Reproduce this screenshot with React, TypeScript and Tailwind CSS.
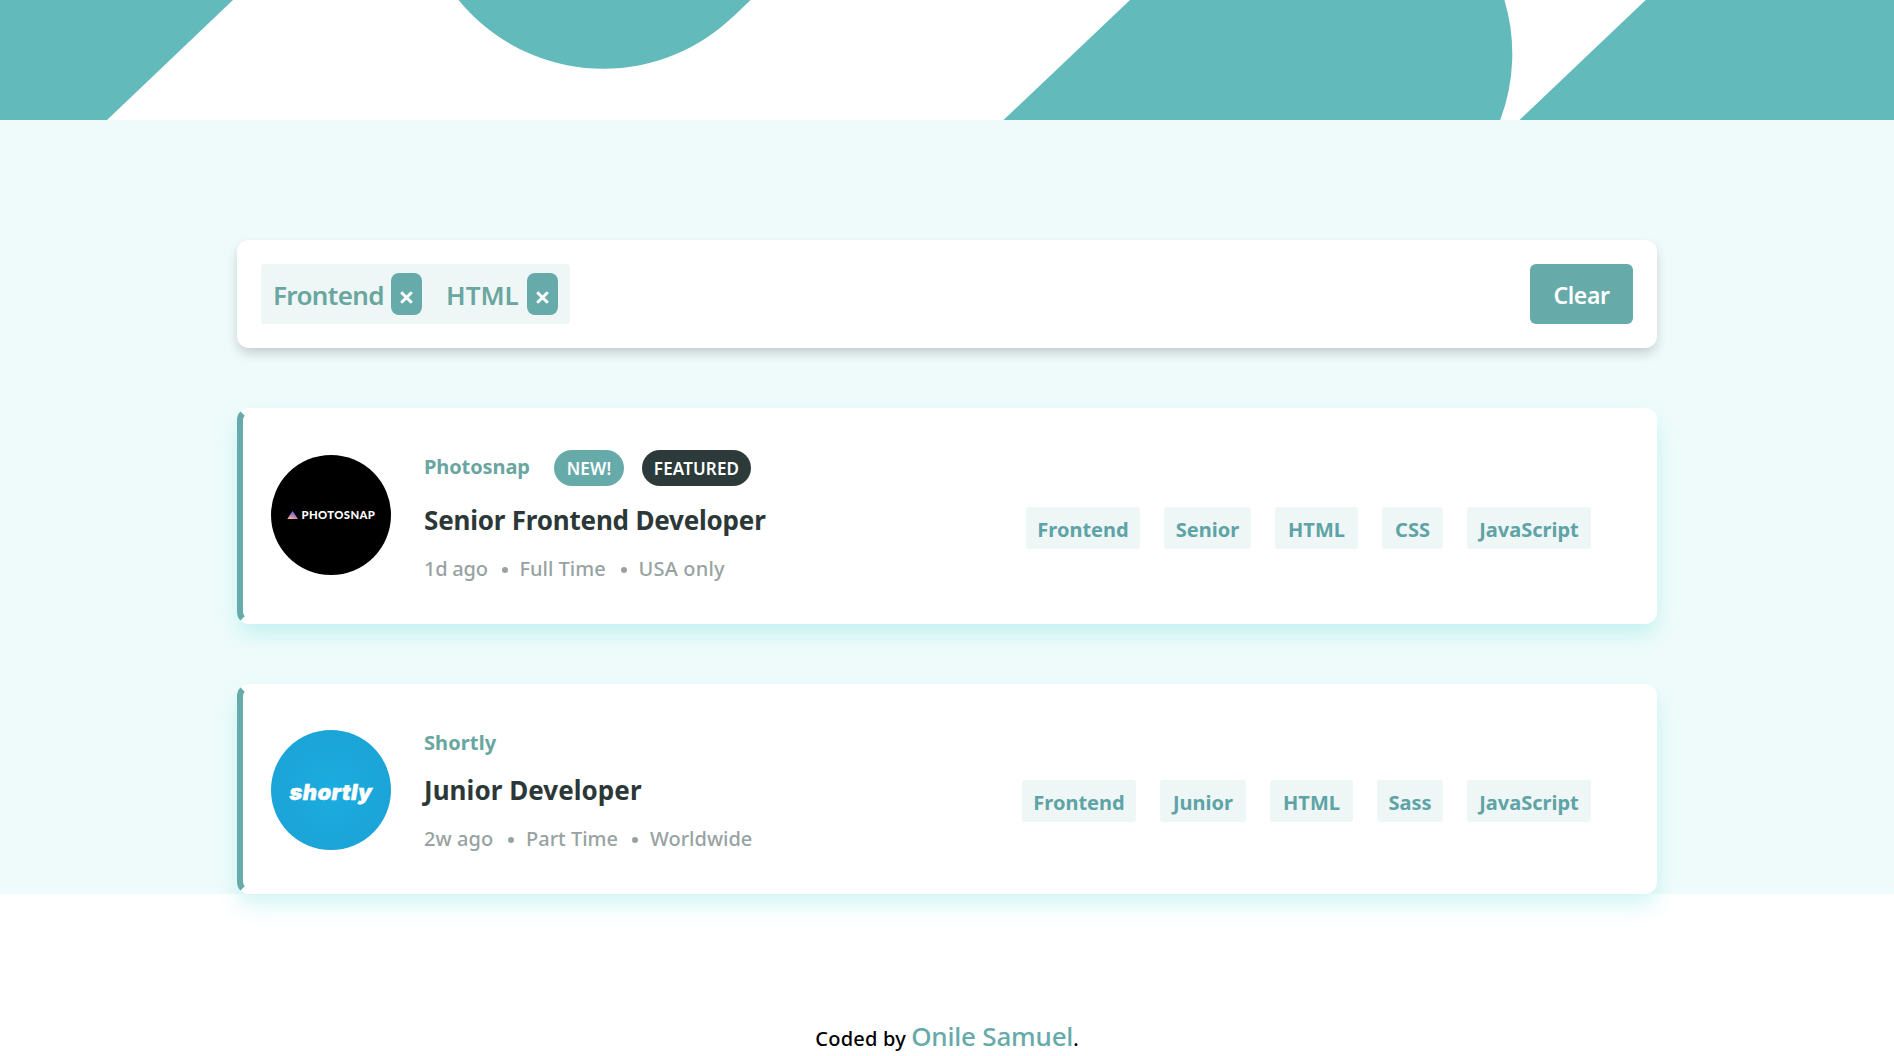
import React from "react";

type Sized = { label: string; width: string };

type Job = {
  company: string;
  logo: React.ReactNode;
  isNew?: boolean;
  featured?: boolean;
  title: string;
  titleSpacing: string;
  meta: Sized[];
  tags: Sized[];
  card: string;
  logoOffset: string;
  tagsOffset: string;
};

function HeaderPattern() {
  return (
    <svg className="block h-[120px] w-full" viewBox="0 0 1894 120" preserveAspectRatio="none" fill="#63babb">
      <path d="M0 0H233L107 120H0Z" />
      <circle cx="603.4" cy="-118.2" r="187" />
      <path d="M603.4 0H750.6L732.4 17.3L650 40Z" />
      <path d="M1130 0H1504.4A187 187 0 0 1 1500.2 120H1003.5Z" />
      <path d="M1645.7 0H1894V120H1519.5Z" />
    </svg>
  );
}

function PhotosnapLogo() {
  return (
    <svg className="block size-[120px]" viewBox="0 0 120 120">
      <defs>
        <linearGradient id="snap" x1="0.2" y1="1" x2="0.65" y2="0.1">
          <stop offset="0" stopColor="#ffb48a" />
          <stop offset="0.5" stopColor="#b880b8" />
          <stop offset="1" stopColor="#5068f0" />
        </linearGradient>
      </defs>
      <circle cx="60" cy="60" r="60" fill="#000" />
      <path d="M16.3 64L21.6 56L27 64Z" fill="url(#snap)" />
      <text x="30.5" y="64" fill="#fff" fontFamily="Lato, sans-serif" fontWeight="900" fontSize="11.3" textLength="73.4">
        PHOTOSNAP
      </text>
    </svg>
  );
}

function ShortlyLogo() {
  return (
    <svg className="block size-[120px]" viewBox="0 0 120 120">
      <defs>
        <radialGradient id="short">
          <stop offset="0" stopColor="#1cacdf" />
          <stop offset="1" stopColor="#1ba4d8" />
        </radialGradient>
      </defs>
      <circle cx="60" cy="60" r="60" fill="url(#short)" />
      <text
        x="18.6"
        y="69.5"
        fill="#fff"
        stroke="#fff"
        strokeWidth="0.4"
        fontFamily="Inter, sans-serif"
        fontWeight="900"
        fontStyle="italic"
        fontSize="22"
        textLength="82.5"
      >
        shortly
      </text>
    </svg>
  );
}

const jobs: Job[] = [
  {
    company: "Photosnap",
    logo: <PhotosnapLogo />,
    isNew: true,
    featured: true,
    title: "Senior Frontend Developer",
    titleSpacing: "tracking-[-0.2px]",
    meta: [
      { label: "1d ago", width: "w-[65.5px] tracking-[-0.25px]" },
      { label: "Full Time", width: "w-[89px]" },
      { label: "USA only", width: "w-[92px] tracking-[0.2px]" },
    ],
    tags: [
      { label: "Frontend", width: "w-[114px]" },
      { label: "Senior", width: "w-[87px]" },
      { label: "HTML", width: "w-[83px]" },
      { label: "CSS", width: "w-[61px]" },
      { label: "JavaScript", width: "w-[124px]" },
    ],
    card: "h-[216px] pt-9",
    logoOffset: "mt-[5px]",
    tagsOffset: "mt-[57px]",
  },
  {
    company: "Shortly",
    logo: <ShortlyLogo />,
    title: "Junior Developer",
    titleSpacing: "tracking-[0.05px]",
    meta: [
      { label: "2w ago", width: "w-[72px] tracking-[0.1px]" },
      { label: "Part Time", width: "w-[94px]" },
      { label: "Worldwide", width: "w-[106px]" },
    ],
    tags: [
      { label: "Frontend", width: "w-[114px]" },
      { label: "Junior", width: "w-[86px]" },
      { label: "HTML", width: "w-[83px]" },
      { label: "Sass", width: "w-[66px]" },
      { label: "JavaScript", width: "w-[124px]" },
    ],
    card: "h-[210px] pt-10",
    logoOffset: "mt-0",
    tagsOffset: "mt-[50px]",
  },
];

function FilterItem({ label, text }: { label: string; text: string }) {
  return (
    <div className="flex h-[60px] items-center gap-2">
      <span className={`pt-0.5 text-[26px] leading-[60px] font-[560] text-[#69a6a0] ${text}`}>{label}</span>
      <button className="flex h-[42px] w-[31px] items-center justify-center rounded-lg bg-[#66aaaa]" aria-label={`Remove ${label}`}>
        <svg className="mt-[6px] size-[13px]" viewBox="0 0 13 13" stroke="#fff" strokeWidth="3" strokeLinecap="butt">
          <path d="M1.2 1.2L11.8 11.8M11.8 1.2L1.2 11.8" />
        </svg>
      </button>
    </div>
  );
}

function JobCard({ job }: { job: Job }) {
  return (
    <article
      className={`flex items-start rounded-xl border-6 border-transparent border-l-[#66aaaa] bg-white pr-[60px] pl-7 shadow-[0_11px_22px_-2px_rgba(90,215,215,0.31)] ${job.card}`}
    >
      <div className={job.logoOffset}>{job.logo}</div>
      <div className="ml-[33px]">
        <div className={job.isNew ? "flex h-9" : "flex h-6"}>
          <span className={`text-xl font-bold text-[#69a6a0] ${job.isNew ? "w-[130px] tracking-[-0.1px] leading-[33px]" : "tracking-[0.1px] leading-[26px]"}`}>
            {job.company}
          </span>
          {job.isNew && (
            <span className="flex w-[70px] items-center justify-center rounded-full bg-[#66aaaa] pt-px text-[17px] font-[560] tracking-[0.2px] text-white">
              NEW!
            </span>
          )}
          {job.featured && (
            <span className="ml-[18px] flex w-[109px] items-center justify-center rounded-full bg-[#2c3a3a] pt-px text-[17px] font-[560] tracking-[0.15px] text-white">
              FEATURED
            </span>
          )}
        </div>
        <h2 className={`text-[26px] leading-[30px] font-bold text-[#2c3838] ${job.titleSpacing} ${job.isNew ? "mt-[19px]" : "mt-[21px]"}`}>
          {job.title}
        </h2>
        <div className="mt-[22px] flex h-6 items-center text-xl leading-[26px] font-[540] text-[#98a2a2]">
          {job.meta.map((item, i) => (
            <React.Fragment key={item.label}>
              {i > 0 && <span className="mx-3 mt-px size-1.5 rounded-full bg-[#98a2a2]" />}
              <span className={`whitespace-nowrap ${item.width}`}>{item.label}</span>
            </React.Fragment>
          ))}
        </div>
      </div>
      <div className={`ml-auto flex gap-6 ${job.tagsOffset}`}>
        {job.tags.map((tag) => (
          <span
            key={tag.label}
            className={`h-[42px] rounded-[3px] bg-[#eef6f6] text-center text-xl leading-[45px] font-bold text-[#5ea3a6] ${tag.width}`}
          >
            {tag.label}
          </span>
        ))}
      </div>
    </article>
  );
}

export default function App() {
  return (
    <div className="h-[1056px] overflow-hidden bg-white font-['Noto_Sans',sans-serif]">
      <HeaderPattern />
      <main className="flex h-[774px] flex-col gap-[60px] bg-[#effbfb] px-[237px] pt-[120px]">
        <section className="flex h-[108px] shrink-0 items-center justify-between rounded-xl bg-white px-6 shadow-[0_6px_12px_-1px_rgba(0,0,0,0.19)]">
          <div className="flex h-[60px] gap-6 rounded-[3px] bg-[#eef6f6] px-3">
            <FilterItem label="Frontend" text="w-[110px] tracking-[-0.65px]" />
            <FilterItem label="HTML" text="w-[73px]" />
          </div>
          <button className="h-[60px] w-[103px] rounded-md bg-[#66aaaa] pt-0.5 text-[23px] font-[560] tracking-[-0.4px] text-white">
            Clear
          </button>
        </section>
        {jobs.map((job) => (
          <JobCard key={job.company} job={job} />
        ))}
      </main>
      <footer className="pt-[122px] text-center text-xl leading-10 font-[540] text-black">
        <span className="tracking-[0.2px]">Coded by</span>{" "}
        <a className="text-[26px] tracking-[-0.2px] text-[#66aaaa]">Onile Samuel</a>.
      </footer>
    </div>
  );
}
